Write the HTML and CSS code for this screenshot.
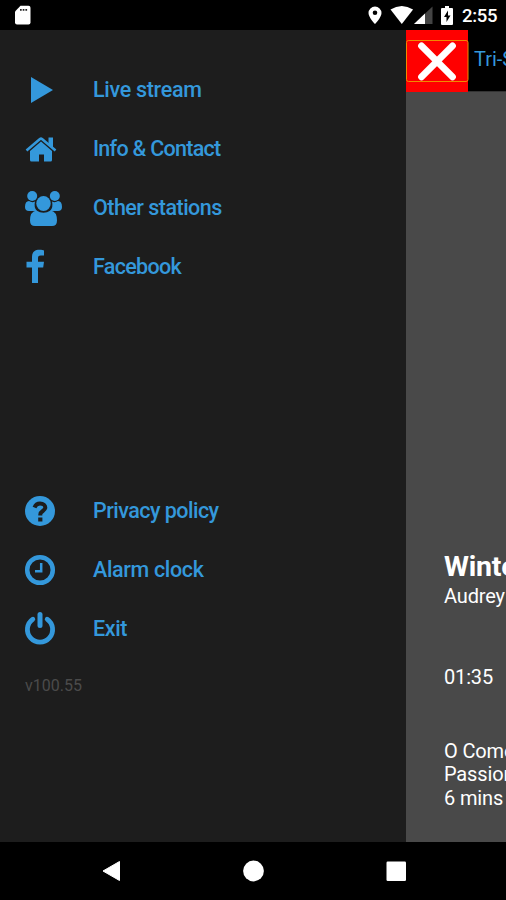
FILE: index.html
```
<!DOCTYPE html>
<html lang="en">
<head>
<meta charset="utf-8">
<meta name="viewport" content="width=device-width">
<title>Radio menu</title>
<link rel="stylesheet" href="styles.css">
</head>
<body>
<div class="screen">
  <header class="status">
    <svg class="sd" viewBox="0 0 18 20"><path fill="#fff" d="M6.500 .8h8q2 0 2 2v14.700q0 2-2 2H3q-2 0-2-2V6.500z"/><path stroke="#222" stroke-width="1.800" stroke-dasharray="1.7 1" d="M6 4.800h7.500"/></svg>
    <svg class="signals" viewBox="0 0 90 30">
      <path fill="#fff" fill-rule="evenodd" d="M7 6.500a6.500 6.500 0 0 0-6.500 6.500c0 4.500 6.500 11 6.500 11s6.500-6.500 6.500-11A6.500 6.500 0 0 0 7 6.500zm0 4a2.300 2.300 0 1 1 0 4.600 2.300 2.300 0 0 1 0-4.600z"/>
      <path fill="#fff" d="M22.500 9.500q11.300-7 22.600 0L33.800 24z"/>
      <path fill="#444" d="M64.500 6.500V24H46z"/><path fill="#fff" d="M57 13.600V24H46z"/>
      <path fill="#fff" d="M77 6h4v2h3q1 0 1 1v15q0 1-1 1H74q-1 0-1-1V9q0-1 1-1h3z"/>
      <path fill="#000" d="M80 10.500l-4 6.500h2.500v5l4-6.500H80z"/>
    </svg>
    <span class="time">2:55</span>
  </header>
  <main class="main">
    <nav class="drawer">
      <div class="item"><svg viewBox="0 0 46 59"><path d="M11 17l22 13-22 13z"/></svg><span class="w1">Live stream</span></div>
      <div class="item"><svg viewBox="0 0 46 59"><path d="M21 22.500L32 32v9q0 1.500-1.500 1.500H24v-7h-5v7h-7.500Q10 42.500 10 41v-9z"/><path d="M28.500 18.500H33V29l-4.500-4z"/><path class="line" stroke-width="2.600" stroke-linejoin="round" d="M6.500 31.500L20 20q1-.8 2 0l13.500 11.500"/></svg><span class="w2">Info &amp; Contact</span></div>
      <div class="item"><svg viewBox="0 0 46 59"><circle cx="12.200" cy="18" r="5"/><circle cx="34.800" cy="18" r="5"/><path d="M9 23q3 2 6 .5-1.500 6 2 9.500h-8q-4 0-4-4 0-6 4-6zM38 23q-3 2-6 .5 1.500 6-2 9.500h8q4 0 4-4 0-6-4-6z"/><ellipse cx="23.500" cy="25.500" rx="7.200" ry="7.500"/><path d="M16.500 32.500q7 4.500 14 0 6.500 1 6.500 10 0 5.500-5 5.500H15q-5 0-5-5.500 0-9 6.500-10z"/></svg><span class="w3">Other stations</span></div>
      <div class="item"><svg viewBox="0 0 46 59"><path d="M24 13.400v5h-3.200c-2.400 0-2.800 1.200-2.800 3v3.400h6l-.8 5.700H18V46h-6V30.500H6.500v-5.700H12V20c0-5 3-7.200 7.500-7.200 2.200 0 4 .3 4.500.6z"/></svg><span class="w4">Facebook</span></div>
      <div class="item second"><svg viewBox="0 0 46 59"><circle cx="20" cy="30" r="15"/><path class="cut" stroke-width="4" d="M14.500 26.500q1.500-4 5.500-4c3.500 0 5.300 1.800 5.300 4 0 3.500-5 3.500-5 7v1"/><path class="cut" stroke-width="4.200" d="M20.300 36.500v4"/></svg><span class="w5">Privacy policy</span></div>
      <div class="item"><svg viewBox="0 0 46 59"><circle class="line" cx="20" cy="30" r="12.800" stroke-width="4.500"/><path class="line" stroke-width="2.500" d="M21.200 23v8.300H15"/></svg><span class="w6">Alarm clock</span></div>
      <div class="item"><svg viewBox="0 0 46 59"><path class="line" stroke-width="4.800" stroke-linecap="round" d="M12.800 20.200a12.600 12.600 0 1 0 14.400 0"/><path class="line" stroke-width="5" stroke-linecap="round" d="M20 15.500v11"/></svg><span class="w7">Exit</span></div>
      <div class="version">v100.55</div>
    </nav>
    <section class="player">
      <div class="bar">
        <div class="close"><svg viewBox="0 0 63 62"><rect x=".5" y="10.500" width="61.500" height="41" rx="2" fill="none" stroke="#f08a00"/><path stroke="#fff" stroke-width="6.800" stroke-linecap="round" d="M15.500 15.800l31 31M46.500 15.800l-31 31"/></svg></div>
        <span class="station">Tri-State</span>
      </div>
      <div class="info">
        <div class="title">Winter</div>
        <div class="artist">Audrey</div>
        <div class="clock">01:35</div>
        <div class="next">O Come<br>Passion<br>6 mins</div>
      </div>
    </section>
  </main>
  <footer class="buttons">
    <svg viewBox="0 0 506 58"><path fill="#fff" stroke="#fff" stroke-linejoin="round" d="M103 29l16.500-9.500v19z"/><circle cx="253.500" cy="29" r="10.400" fill="#fff"/><rect x="386.500" y="19.500" width="19.500" height="19.500" rx="1.200" fill="#fff"/></svg>
  </footer>
</div>
</body>
</html>
```
FILE: styles.css
```
* { box-sizing: border-box; }
body { margin: 0; background: #000; font-family: Roboto, "Liberation Sans", sans-serif; }
.screen { width: 506px; height: 900px; display: flex; flex-direction: column; overflow: hidden; background: #000; }
.status { height: 30px; display: flex; align-items: center; color: #fff; padding-left: 14px; }
.sd { width: 18px; height: 20px; }
.signals { width: 90px; height: 30px; margin-left: 336px; }
.time { font-size: 18.5px; font-weight: 500; line-height: 30px; margin-left: 4px; padding-top: 2px; white-space: nowrap; letter-spacing: -.3px; }
.main { height: 812px; display: flex; }
.drawer { width: 406px; flex: none; background: #1d1d1d; padding: 30px 20px 0; }
.item { display: flex; align-items: center; height: 59px; color: #3498db; font-size: 21.5px; font-weight: 500; white-space: nowrap; }
.item svg { width: 46px; height: 59px; margin-right: 27px; fill: #3498db; flex: none; }
.item .line { fill: none; stroke: #3498db; }
.item .cut { fill: none; stroke: #1d1d1d; }
.w1 { letter-spacing: -.3px; }
.w2 { letter-spacing: -.73px; }
.w3 { letter-spacing: -.52px; }
.w4 { letter-spacing: -.68px; }
.w5 { letter-spacing: -.53px; }
.w6 { letter-spacing: -.34px; }
.w7 { letter-spacing: -.4px; }
.second { margin-top: 185px; }
.version { color: #4b4b4b; font-size: 16px; line-height: 20px; margin: 18px 0 0 5px; }
.player { flex: 1; min-width: 0; background: #494949; color: #fff; overflow: hidden; white-space: nowrap; }
.bar { height: 62px; background: #000; display: flex; align-items: center; border-bottom: 1px solid #333; }
.close { width: 62px; height: 62px; background: #f00; flex: none; }
.close svg { width: 63px; height: 62px; display: block; }
.station { color: #3498db; font-size: 20px; margin-left: 6px; padding-bottom: 4px; }
.info { padding: 458px 0 0 38px; font-size: 20px; letter-spacing: -.15px; }
.title { font-size: 28.5px; font-weight: 700; line-height: 34px; letter-spacing: -.2px; }
.artist { line-height: 24px; }
.clock { line-height: 24px; margin-top: 57px; }
.next { line-height: 23.4px; margin-top: 51px; }
.buttons { height: 58px; }
.buttons svg { width: 506px; height: 58px; display: block; }
```
